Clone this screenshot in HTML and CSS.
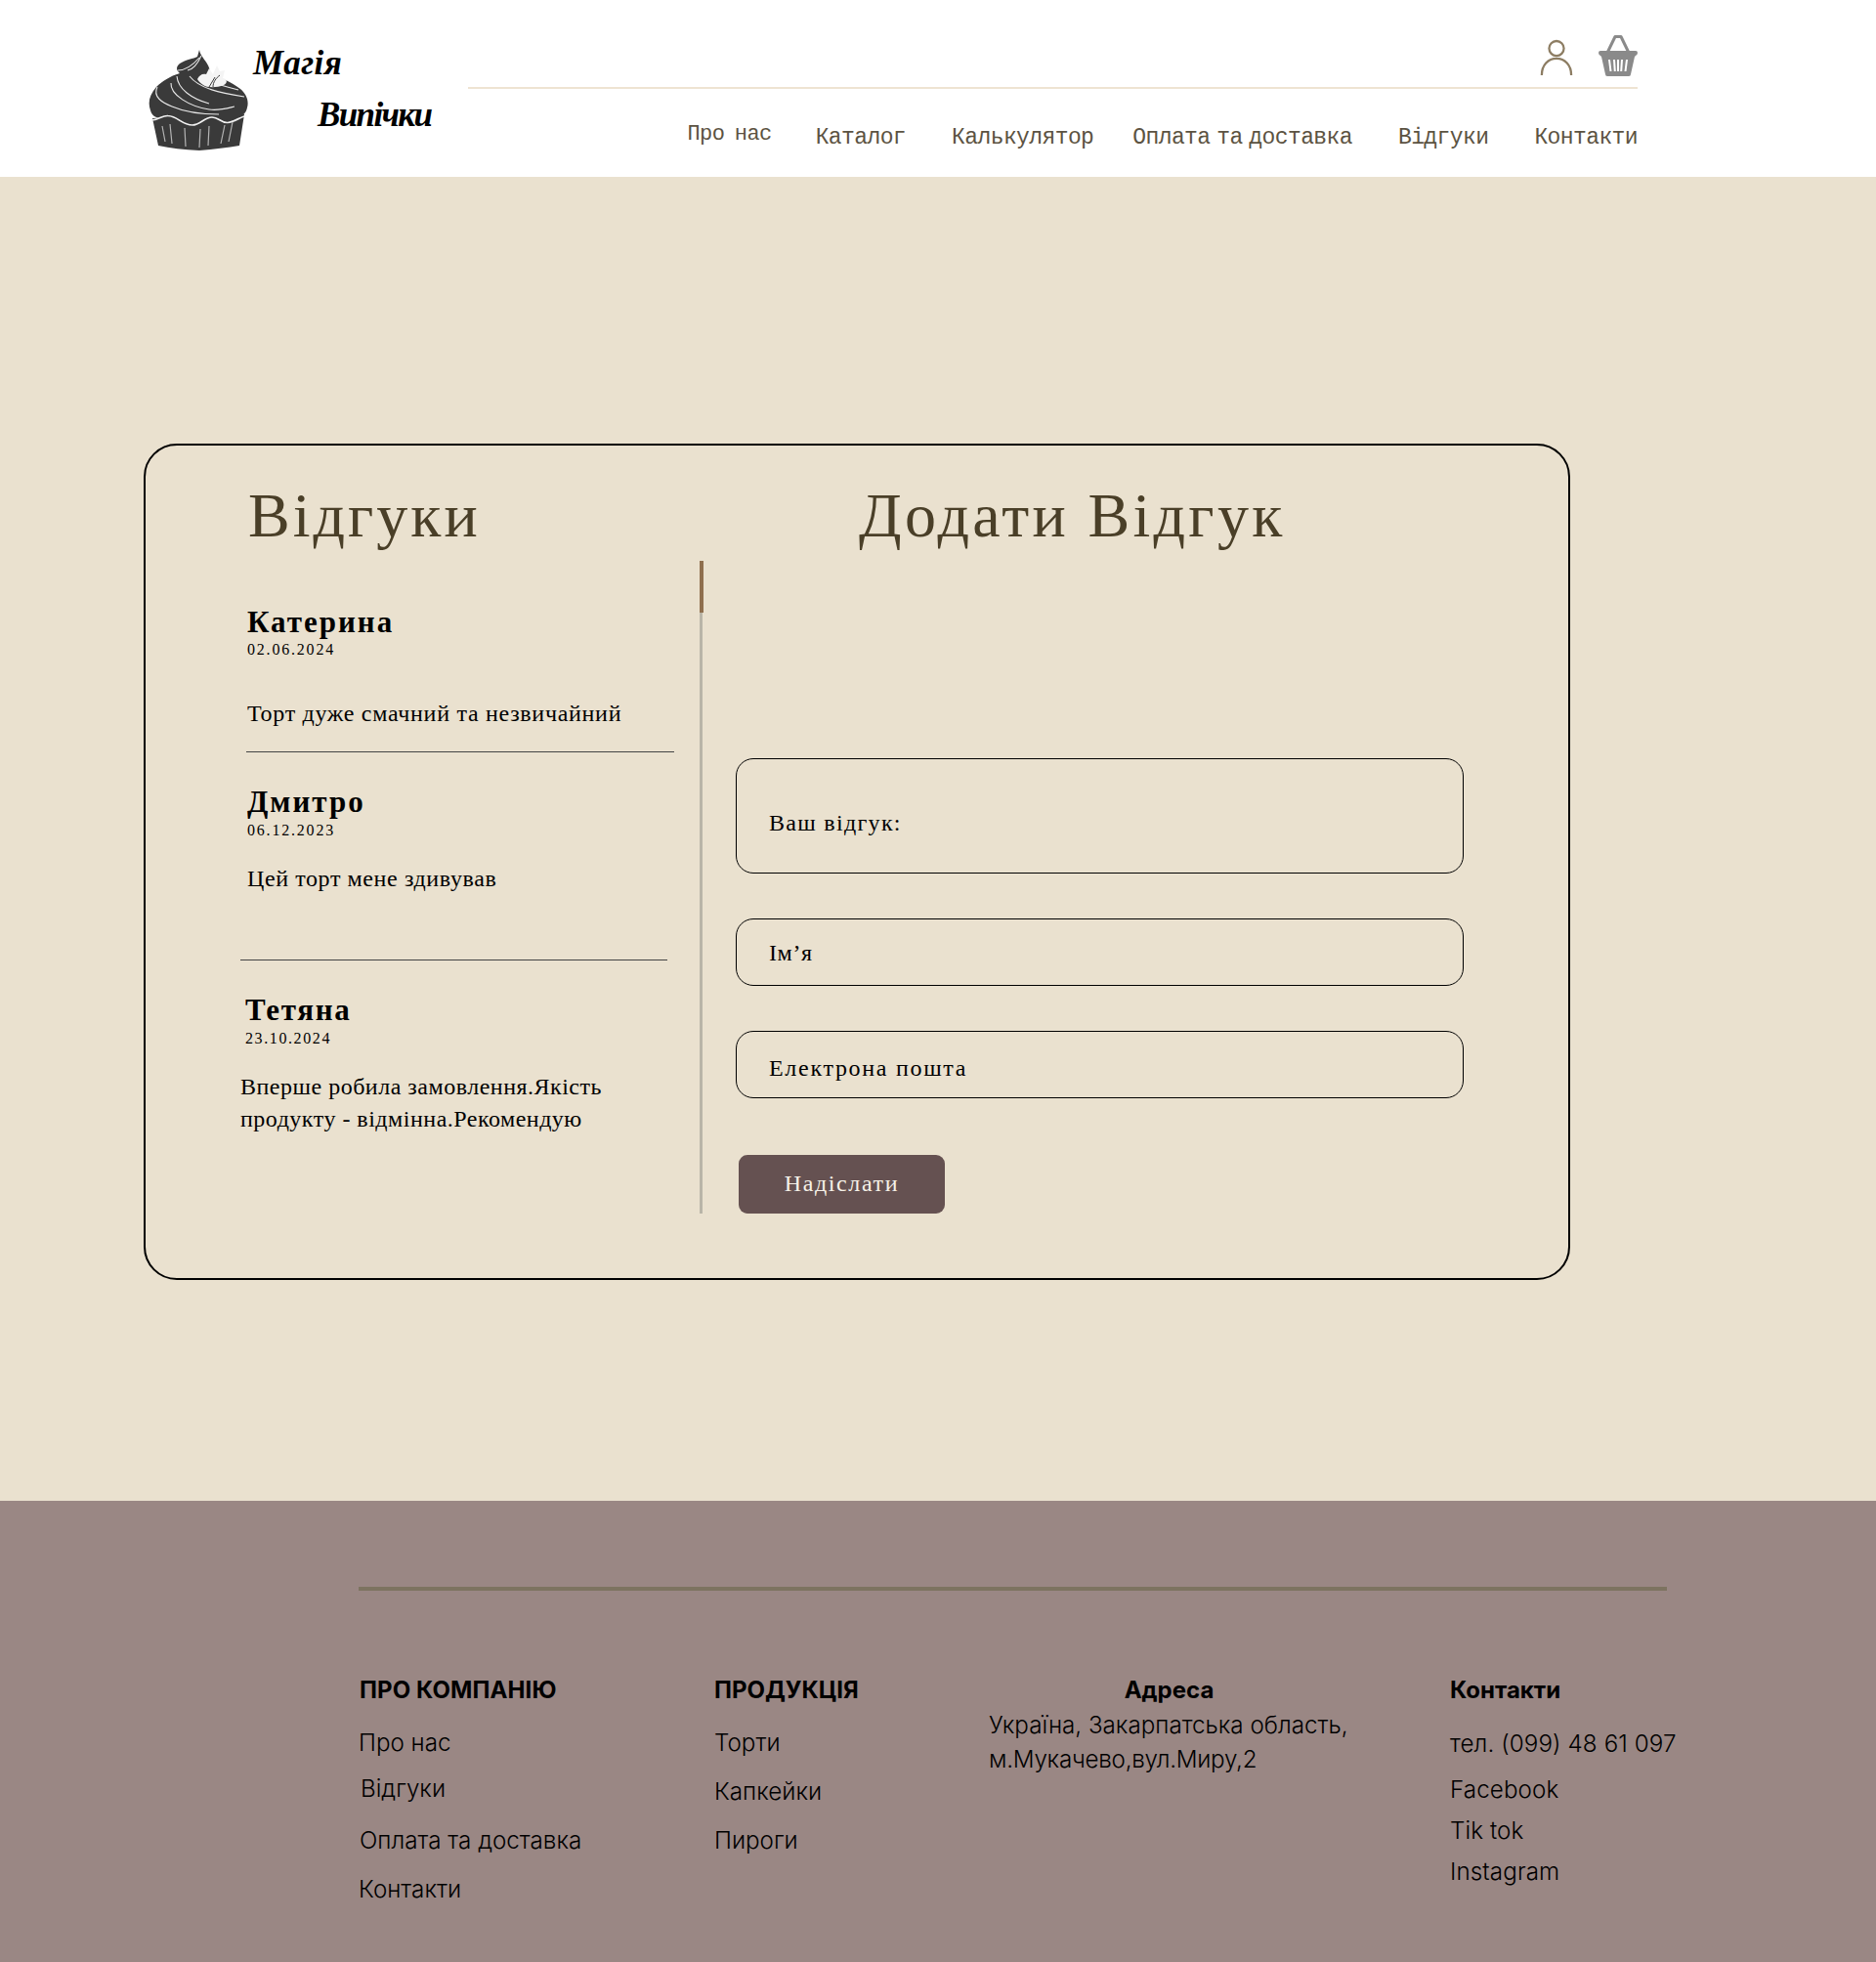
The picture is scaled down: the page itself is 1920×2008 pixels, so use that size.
FILE: index.html
```html
<!DOCTYPE html>
<html lang="uk">
<head>
<meta charset="utf-8">
<title>Відгуки</title>
<link rel="stylesheet" href="styles.css">
</head>
<body>
<header class="site-header">
  <a class="logo" href="#">
    <svg class="cupcake" viewBox="0 0 102 104" aria-hidden="true">
      <path class="ck-dark" d="M4 70 L98 66 L93 98 Q75 101 52 103 Q28 102 10 98 Z"/>
      <path class="ck-dark" d="M52 0 C53 6 58 10 61 16 C63 20 63 23 62 26 C72 27 85 33 94 40 C100 45 103 52 101 59 C100 65 96 68 90 69 C80 72 72 74 66 72 C58 71 52 78 44 77 C36 77 30 69 20 70 C12 71 4 70 2 62 C-1 54 1 46 8 38 C14 32 22 27 32 24 C28 21 28 17 32 14 C38 10 46 9 50 7 Z"/>
      <path class="ck-wave" d="M3 72 C10 72 14 67 20 67.5 C30 68 34 77 45 77 C53 77 57 69 65 69 C72 69 74 75 81 74.500 C87 74 92 70 98 68"/>
      <path class="ck-line" d="M9 38 C4 48 14 54 24 58 C38 64 55 66 72 66"/>
      <path class="ck-line" d="M23 34 C22 46 42 58 62 61 C72 62.500 80 60 88 58"/>
      <path class="ck-line" d="M29 27 C30 40 44 50 62 55"/>
      <path class="ck-line" d="M42 27 C52 40 74 44 98 48"/>
      <path class="ck-line" d="M30 21 C38 21 46 15 52 8"/>
      <path class="ck-line" d="M40 21 C46 20 50 15 54 6"/>
      <path class="ck-line" d="M62 32 C70 35 80 38 92 41"/>
      <path class="ck-leaf" d="M50 30 C52 26 55 24 59 25 L62 19 L66 25 L70 16 L73 22 L78 21 L76 29 C81 30 81 34 77 36 C70 39 60 39 56 36 C53 34 51 32 50 30 Z"/>
      <path class="ck-vein" d="M66 38 C66 33 69 29 73 26 M62 38 L68 28"/>
      <path class="ck-rib" d="M14 78 L17 94 M22 76 L24 96 M37 80 L38 99 M53 81 L52 100 M62 78 L61 98 M78 77 L74 96 M86 74 L82 94"/>
    </svg>
    <span class="logo-text">
      <span class="logo-line-one">Магія</span>
      <span class="logo-line-two">Випічки</span>
    </span>
  </a>
  <div class="header-right">
    <div class="header-icons">
      <svg class="icon-user" viewBox="0 0 36 40" aria-hidden="true">
        <circle cx="18" cy="10" r="8"/>
        <path d="M2 39 C2 28 9 21 18 21 C27 21 34 28 34 39"/>
      </svg>
      <svg class="icon-basket" viewBox="0 0 40 42" aria-hidden="true">
        <path class="bk-handle" d="M9 18 L17 1.500 H23 L31 18"/>
        <path class="bk-body" d="M2 16 H38 Q40 16 40 18 Q40 20 38 21 L37 22 L33 40 Q33 42 31 42 H9 Q7 42 7 40 L3 22 L2 21 Q0 20 0 18 Q0 16 2 16 Z"/>
        <path class="bk-slit" d="M11 25 L12.500 37 M16 25 L16.800 37 M20 25 V37 M24 25 L23.200 37 M29 25 L27.500 37"/>
      </svg>
    </div>
    <nav class="main-nav">
      <a class="nav-first" href="#">Про нас</a>
      <a href="#">Каталог</a>
      <a href="#">Калькулятор</a>
      <a class="nav-tight" href="#">Оплата та доставка</a>
      <a href="#">Відгуки</a>
      <a href="#">Контакти</a>
    </nav>
  </div>
</header>

<main class="page-main">
  <section class="card">
    <div class="reviews-col">
      <h1 class="title title-reviews">Відгуки</h1>
      <div class="reviews-body">
        <div class="reviews-list">
          <article class="review review-one">
            <h2 class="review-name">Катерина</h2>
            <div class="review-date">02.06.2024</div>
            <p class="review-text">Торт дуже смачний та незвичайний</p>
          </article>
          <article class="review review-two">
            <h2 class="review-name">Дмитро</h2>
            <div class="review-date">06.12.2023</div>
            <p class="review-text">Цей торт мене здивував</p>
          </article>
          <article class="review review-three">
            <h2 class="review-name">Тетяна</h2>
            <div class="review-date">23.10.2024</div>
            <p class="review-text">Вперше робила замовлення.Якість<br>продукту - відмінна.Рекомендую</p>
          </article>
        </div>
        <div class="scrollbar"><div class="scrollbar-thumb"></div></div>
      </div>
    </div>
    <div class="form-col">
      <h1 class="title title-add">Додати Відгук</h1>
      <form class="review-form">
        <div class="field field-large"><span>Ваш відгук:</span></div>
        <div class="field field-name"><span>Ім’я</span></div>
        <div class="field field-email"><span>Електрона пошта</span></div>
        <button class="send" type="button">Надіслати</button>
      </form>
    </div>
  </section>
</main>

<footer class="site-footer">
  <div class="footer-rule"></div>
  <div class="footer-cols">
    <div class="fcol fcol-company">
      <h3>ПРО КОМПАНІЮ</h3>
      <ul>
        <li>Про нас</li>
        <li>Відгуки</li>
        <li>Оплата та доставка</li>
        <li>Контакти</li>
      </ul>
    </div>
    <div class="fcol fcol-products">
      <h3>ПРОДУКЦІЯ</h3>
      <ul>
        <li>Торти</li>
        <li>Капкейки</li>
        <li>Пироги</li>
      </ul>
    </div>
    <div class="fcol fcol-address">
      <h3>Адреса</h3>
      <p>Україна, Закарпатська область,<br><span class="address-city">м.Мукачево,вул.Миру,2</span></p>
    </div>
    <div class="fcol fcol-contacts">
      <h3>Контакти</h3>
      <ul>
        <li>тел. (099) 48 61 097</li>
        <li>Facebook</li>
        <li>Tik tok</li>
        <li>Instagram</li>
      </ul>
    </div>
  </div>
</footer>
</body>
</html>
```

FILE: styles.css
```css
* { box-sizing: border-box; }
html, body { margin: 0; padding: 0; }
body {
  width: 1920px;
  height: 2008px;
  background: #eae1cf;
  font-family: "Liberation Serif", serif;
  color: #000;
  overflow: hidden;
}
h1, h2, h3, p, ul { margin: 0; padding: 0; }
ul { list-style: none; }
a { color: inherit; text-decoration: none; }

/* header */
.site-header {
  height: 181px;
  background: #fff;
  display: flex;
  padding-left: 152px;
}
.logo { display: flex; width: 327px; }
.cupcake { width: 102px; height: 104px; margin-top: 51px; flex: none; }
.ck-dark { fill: #3a3a3a; }
.ck-line { fill: none; stroke: #e8e8e8; stroke-width: 1.1; }
.ck-wave { fill: none; stroke: #f0f0f0; stroke-width: 1.7; }
.ck-leaf { fill: #f4f4f4; }
.ck-vein { fill: none; stroke: #3a3a3a; stroke-width: 1; }
.ck-rib { fill: none; stroke: #b4b4b4; stroke-width: 1.2; }
.logo-text {
  display: flex;
  flex-direction: column;
  font-family: "Liberation Serif", serif;
  font-style: italic;
  font-weight: 700;
  font-size: 35px;
  line-height: 40px;
  margin-top: 45px;
  margin-left: 5px;
  white-space: nowrap;
}
.logo-line-one { letter-spacing: 0.5px; }
.logo-line-two { margin-left: 66px; margin-top: 13px; letter-spacing: -1.600px; }

.header-right { width: 1197px; }
.header-icons {
  height: 91px;
  border-bottom: 2px solid #eee3d2;
  display: flex;
  justify-content: flex-end;
  align-items: flex-start;
  gap: 26px;
}
.icon-user {
  width: 34px;
  height: 38px;
  margin-top: 40px;
  fill: none;
  stroke: #8d7d63;
  stroke-width: 2.4;
}
.icon-basket { width: 40px; height: 42px; margin-top: 36px; }
.bk-handle { fill: none; stroke: #8a8a8a; stroke-width: 3; stroke-linejoin: round; }
.bk-body { fill: #8a8a8a; }
.bk-slit { fill: none; stroke: #fff; stroke-width: 2; }
.main-nav {
  display: flex;
  justify-content: flex-end;
  gap: 47px;
  margin-top: 37px;
  font-family: "Liberation Mono", monospace;
  font-size: 23px;
  letter-spacing: -0.600px;
  line-height: 26px;
  color: #5c5342;
}
.main-nav a { white-space: nowrap; }
.nav-first { font-size: 22px; margin-top: -3px; word-spacing: -2px; margin-right: -2px; }
.nav-tight { word-spacing: -6.500px; margin-left: -7px; }

/* main card */
.page-main { height: 1355px; padding: 273px 0 0 147px; }
.card {
  width: 1460px;
  height: 856px;
  border: 2px solid #000;
  border-radius: 34px;
  display: flex;
}
.title {
  font-weight: 400;
  font-size: 64px;
  line-height: 72px;
  color: #4a3f28;
  letter-spacing: 3px;
}
.reviews-col { width: 605px; flex: none; padding-left: 105px; }
.title-reviews { margin-top: 36px; }
.reviews-body { display: flex; margin-top: 10px; }
.reviews-list { width: 464px; flex: none; margin-left: -2px; }
.scrollbar { width: 3px; height: 668px; background: #b9b5a8; }
.scrollbar-thumb { width: 4px; height: 53px; background: #8f6f4e; }

.review-name { font-size: 31px; line-height: 36px; font-weight: 700; letter-spacing: 2px; }
.review-date { font-size: 16px; line-height: 18px; letter-spacing: 1.800px; margin-top: 1px; }
.review-text { font-size: 24px; line-height: 33px; letter-spacing: 0.700px; }
.review-one { margin-top: 45px; height: 151px; width: 438px; border-bottom: 1px solid #444; padding-left: 1px; }
.review-one .review-text { margin-top: 40px; }
.review-two { margin-top: 33px; height: 180px; width: 437px; margin-left: -6px; border-bottom: 1px solid #444; padding-left: 7px; }
.review-two .review-date { margin-top: 2px; }
.review-two .review-text { margin-top: 24px; letter-spacing: 0.600px; }
.review-three { margin-top: 33px; margin-left: -6px; }
.review-three .review-name, .review-three .review-date { margin-left: 5px; }
.review-three .review-name { letter-spacing: 1.700px; }
.review-three .review-date { margin-top: 2px; letter-spacing: 1.600px; }
.review-three .review-text { margin-top: 24px; letter-spacing: 0.500px; }

.form-col { flex: 1; }
.title-add { margin-top: 36px; margin-left: 125px; white-space: nowrap; letter-spacing: 3.300px; }
.review-form { margin-top: 212px; margin-left: -1px; }
.field {
  width: 745px;
  border: 1px solid #000;
  border-radius: 18px;
  padding-left: 33px;
  font-size: 24px;
  letter-spacing: 1.300px;
  line-height: 30px;
  display: flex;
}
.field-large { height: 118px; padding-top: 50px; }
.field-name { height: 69px; margin-top: 46px; padding-top: 19px; letter-spacing: 0.600px; }
.field-email { height: 69px; margin-top: 46px; padding-top: 22px; letter-spacing: 1.700px; }
.send {
  display: block;
  width: 211px;
  height: 60px;
  margin: 58px 0 0 3px;
  padding-bottom: 3px;
  border: 0;
  border-radius: 9px;
  background: #655151;
  color: #f6f1e8;
  font-family: "Liberation Serif", serif;
  font-size: 24px;
  letter-spacing: 1.600px;
}

/* footer */
.site-footer {
  height: 472px;
  background: #9a8784;
  padding: 88px 0 0 367px;
  font-family: Inter, sans-serif;
  font-weight: 300;
  font-size: 24.200px;
  color: #000;
}
.footer-rule { width: 1339px; height: 4px; background: #7d7360; }
.footer-cols { display: flex; margin-top: 87px; }
.fcol h3 { font-size: 24px; line-height: 30px; font-weight: 700; }
.fcol-company h3 { letter-spacing: 0.100px; padding-left: 1px; }
.fcol li, .fcol p { line-height: 30px; white-space: nowrap; }
.fcol-company { width: 364px; }
.fcol-products { width: 281px; }
.fcol-address { width: 472px; }
.fcol-address h3 { text-align: center; width: 369px; }
.fcol-address p { line-height: 35px; margin-top: 3px; }
.address-city { letter-spacing: -0.250px; }
.fcol-contacts li { letter-spacing: 0.100px; }
.fcol-company li:nth-child(1), .fcol-products li:nth-child(1) { margin-top: 24px; }
.fcol-company li:nth-child(2) { margin-top: 17px; margin-left: 2px; }
.fcol-company li:nth-child(3) { margin-top: 23px; margin-left: 1px; }
.fcol-company li:nth-child(4) { margin-top: 20px; }
.fcol-products li:nth-child(2) { margin-top: 20px; }
.fcol-products li:nth-child(3) { margin-top: 20px; }
.fcol-contacts li:nth-child(1) { margin-top: 25px; }
.fcol-contacts li:nth-child(2) { margin-top: 17px; }
.fcol-contacts li:nth-child(3) { margin-top: 12px; }
.fcol-contacts li:nth-child(4) { margin-top: 12px; }
```
